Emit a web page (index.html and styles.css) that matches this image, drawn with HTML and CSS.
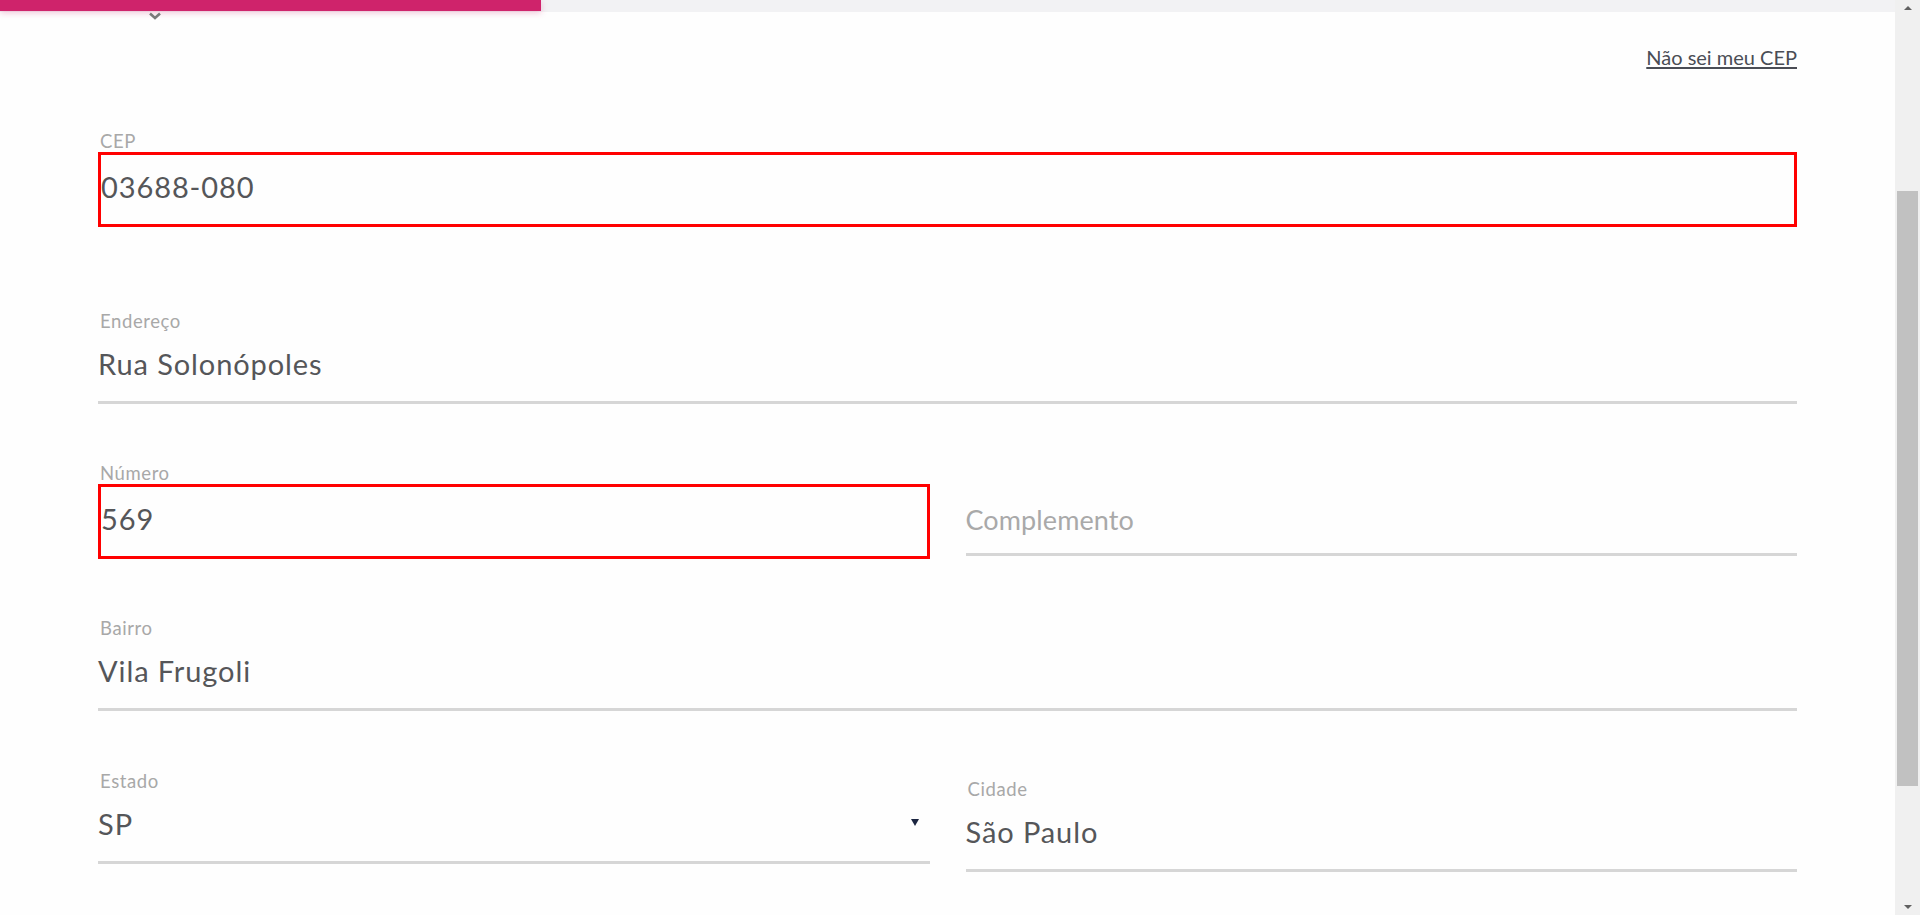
FILE: index.html
```html
<!DOCTYPE html>
<html lang="pt-BR">
<head>
<meta charset="utf-8">
<title>Endereço</title>
<link rel="stylesheet" href="styles.css">
</head>
<body>
<div class="page">
  <main class="main">
    <div class="progress">
      <div class="progress-fill"></div>
      <svg class="progress-caret" width="14" height="8" viewBox="0 0 14 8"><path d="M2 1.5 L7 6 L12 1.5" fill="none" stroke="#7a7a7a" stroke-width="2.6"/></svg>
    </div>
    <form class="form">
      <div class="link-row"><a class="cep-link" href="#">Não sei meu CEP</a></div>

      <div class="field field-cep">
        <label class="field-label">CEP</label>
        <div class="field-input is-error">03688-080</div>
      </div>

      <div class="field">
        <label class="field-label">Endereço</label>
        <div class="field-input">Rua Solonópoles</div>
      </div>

      <div class="row">
        <div class="field">
          <label class="field-label">Número</label>
          <div class="field-input is-error">569</div>
        </div>
        <div class="field">
          <label class="field-label"></label>
          <div class="field-input is-placeholder">Complemento</div>
        </div>
      </div>

      <div class="field">
        <label class="field-label">Bairro</label>
        <div class="field-input">Vila Frugoli</div>
      </div>

      <div class="row row-last">
        <div class="field">
          <label class="field-label">Estado</label>
          <div class="field-input field-select">SP<span class="select-arrow"></span></div>
        </div>
        <div class="field field-city">
          <label class="field-label">Cidade</label>
          <div class="field-input">São Paulo</div>
        </div>
      </div>
    </form>
  </main>
  <aside class="scrollbar">
    <div class="scroll-btn scroll-up"></div>
    <div class="scroll-track"><div class="scroll-thumb"></div></div>
    <div class="scroll-btn scroll-down"></div>
  </aside>
</div>
</body>
</html>
```

FILE: styles.css
```css
html, body {
  margin: 0;
  padding: 0;
  height: 915px;
  overflow: hidden;
  background: #fefefe;
  font-family: Lato, "Open Sans", sans-serif;
}

.page {
  display: flex;
  height: 915px;
}

.main {
  flex: 1;
  min-width: 0;
  background: #fefefe;
}

.progress {
  position: relative;
  height: 12px;
  background: #f2f2f4;
}

.progress-fill {
  width: 541px;
  height: 11px;
  background: #cf236b;
  box-shadow: 0 2px 6px rgba(207, 35, 107, 0.25);
}

.progress-caret {
  position: absolute;
  left: 148px;
  top: 12px;
}

.form {
  padding: 0 98px;
}

.link-row {
  display: flex;
  justify-content: flex-end;
  margin-top: 33px;
  height: 24px;
}

.cep-link {
  font-size: 20px;
  line-height: 24px;
  color: #4a4d55;
  text-decoration: underline;
  text-underline-offset: 2px;
}

.field {
  margin-top: 59px;
}

.field-cep {
  margin-top: 62px;
  margin-bottom: 84px;
}

.field-label {
  display: block;
  height: 21px;
  font-size: 18.5px;
  line-height: 21px;
  letter-spacing: 0.6px;
  color: #a8a8a8;
  padding-left: 2px;
}

.field-input {
  position: relative;
  height: 55px;
  padding-top: 14px;
  font-size: 29px;
  line-height: 35px;
  letter-spacing: 0.9px;
  color: #555659;
  border-bottom: 3px solid #d6d6d6;
}

.field-input.is-error {
  border: 3px solid #ff0000;
  padding-left: 0;
}

.field-input.is-placeholder {
  height: 51px;
  padding-top: 18px;
  font-size: 27px;
  letter-spacing: 0.1px;
  color: #a9a9a9;
}

.row {
  display: grid;
  grid-template-columns: 1fr 1fr;
  column-gap: 36px;
  margin-top: 59px;
}

.row > .field {
  margin-top: 0;
}

.row-last {
  margin-top: 60px;
}

.row > .field-city {
  margin-top: 8px;
}

.select-arrow {
  position: absolute;
  right: 11px;
  top: 27px;
  width: 0;
  height: 0;
  border-left: 4px solid transparent;
  border-right: 4px solid transparent;
  border-top: 7px solid #1b2540;
}

.scrollbar {
  width: 25px;
  flex: none;
  display: flex;
  flex-direction: column;
  background: #f0f0f0;
}

.scroll-btn {
  height: 17px;
  position: relative;
}

.scroll-up::after,
.scroll-down::after {
  content: "";
  position: absolute;
  left: 9px;
  width: 0;
  height: 0;
  border-left: 4px solid transparent;
  border-right: 4px solid transparent;
}

.scroll-up::after {
  top: 6px;
  border-bottom: 4px solid #606060;
}

.scroll-down::after {
  top: 7px;
  border-top: 4px solid #606060;
}

.scroll-track {
  flex: 1;
  padding-top: 174px;
}

.scroll-thumb {
  margin: 0 2px;
  height: 595px;
  background: #c1c1c1;
}
```
